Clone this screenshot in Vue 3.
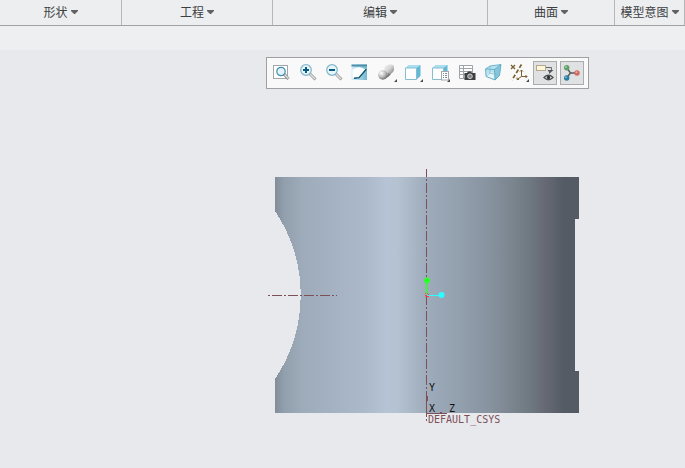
<script setup>
const groups = ['形状', '工程', '编辑', '曲面', '模型意图']

const tools = [
  { id: 'refit', label: '重新调整' },
  { id: 'zoom-in', label: '放大' },
  { id: 'zoom-out', label: '缩小' },
  { id: 'repaint', label: '重画' },
  { id: 'rendering', label: '渲染选项', menu: true },
  { id: 'style', label: '显示样式', menu: true },
  { id: 'saved', label: '已保存方向', menu: true },
  { id: 'views', label: '视图管理器' },
  { id: 'perspective', label: '透视图' },
  { id: 'datum', label: '基准显示过滤器', menu: true },
  { id: 'notes', label: '注释显示', active: true },
  { id: 'spin', label: '旋转中心', active: true },
]
</script>

<template>
  <div class="app">
    <nav class="groups">
      <button v-for="g in groups" :key="g" type="button" class="group">
        <span>{{ g }}</span>
        <svg class="caret" viewBox="0 0 7 4" aria-hidden="true"><path d="M0 0H7V1L4 4H3L0 1Z" /></svg>
      </button>
    </nav>
    <div class="strip"></div>

    <main class="canvas">
      <svg class="model" viewBox="0 0 685 418">
        <defs>
          <linearGradient id="metal" gradientUnits="userSpaceOnUse" x1="275" y1="0" x2="579" y2="0">
            <stop offset="0" stop-color="#828d9a" />
            <stop offset=".03" stop-color="#929fad" />
            <stop offset=".09" stop-color="#9dabba" />
            <stop offset=".21" stop-color="#a5b3c4" />
            <stop offset=".3" stop-color="#abb9cb" />
            <stop offset=".365" stop-color="#b6c3d5" />
            <stop offset=".4" stop-color="#b4c2d1" />
            <stop offset=".45" stop-color="#a9b7c6" />
            <stop offset=".5" stop-color="#9eabbb" />
            <stop offset=".61" stop-color="#929fad" />
            <stop offset=".71" stop-color="#87929f" />
            <stop offset=".79" stop-color="#78838c" />
            <stop offset=".84" stop-color="#6e7880" />
            <stop offset=".885" stop-color="#676a76" />
            <stop offset=".93" stop-color="#5a6069" />
            <stop offset=".95" stop-color="#555b64" />
            <stop offset="1" stop-color="#555b64" />
          </linearGradient>
        </defs>
        <path fill="url(#metal)" shape-rendering="crispEdges" d="M275 127H579V169H575V321H579V363H275V329A150 150 0 0 0 275 161Z" />
        <path class="axis" stroke-dasharray="10 2 2 2" stroke-dashoffset="2" d="M426.500 119V371" />
        <path class="axis" stroke-dasharray="10 2 2 2" stroke-dashoffset="12" d="M268 245.500H337" />
        <path class="axis" d="M426.500 347V364M427.500 346V351M427 363.500H447M440 362.500H442" />
        <path stroke="#ff3a3a" fill="none" d="M425 243.500H428M425.500 246.500H428.500M428.500 244V247M425 245.500H427" />
        <path stroke="#2cff2c" stroke-width="1.500" d="M426.500 230V244" />
        <circle cx="427" cy="230.500" r="3" fill="#2cff2c" />
        <path stroke="#2cffff" d="M427 245.500H442" />
        <circle cx="441.500" cy="245" r="3" fill="#2cffff" />
        <g class="tag">
          <text x="429" y="341">Y</text>
          <text x="429" y="362">X</text>
          <text x="449" y="362">Z</text>
          <text class="csys" x="428" y="373">DEFAULT_CSYS</text>
        </g>
      </svg>

      <div class="toolbar" role="toolbar" aria-label="图形工具栏">
        <button
          v-for="t in tools"
          :key="t.id"
          type="button"
          class="tool"
          :class="{ active: t.active }"
          :aria-label="t.label"
        >
          <svg viewBox="0 0 24 24" aria-hidden="true" fill="none">
            <g v-if="t.id === 'refit'">
              <rect x="4.500" y="4.500" width="14" height="13" fill="#fff" stroke="#a3a7aa" />
              <path d="M15 13L19.500 18" stroke="#8b8f92" stroke-width="3" />
              <path d="M15 13L19.500 17.500" stroke="#dddcd6" stroke-width="1.500" />
              <circle cx="12" cy="10.500" r="4.200" fill="#e5f4fa" stroke="#3f8fae" stroke-width="1.200" />
            </g>
            <g v-else-if="t.id === 'zoom-in' || t.id === 'zoom-out'">
              <path d="M13.500 12.500L19.500 18.500" stroke="#94989a" stroke-width="3" />
              <path d="M13.500 12.500L19 18" stroke="#e3e1dc" stroke-width="1.500" />
              <circle cx="10" cy="9" r="5.300" fill="#e8f6fb" stroke="#7fb5ca" stroke-width="1.200" />
              <path d="M7 9H13" stroke="#075a80" stroke-width="2" />
              <path v-if="t.id === 'zoom-in'" d="M10 6V12" stroke="#075a80" stroke-width="2" />
            </g>
            <g v-else-if="t.id === 'repaint'">
              <defs>
                <linearGradient id="pane" x1="0" y1="0" x2="1" y2="0">
                  <stop offset="0" stop-color="#d9eff6" />
                  <stop offset="1" stop-color="#74b8d2" />
                </linearGradient>
              </defs>
              <rect x="3.500" y="3.500" width="15.500" height="15.500" fill="url(#pane)" />
              <path d="M3.500 3.500H19V5.500H3.500Z" fill="#4b8faa" />
              <path d="M4.500 9Q9 5 14 7L17.500 8.500L11 16.500L4.500 17Z" fill="#fff" />
              <path d="M6 17.300L11 16.700L18.300 8.300" stroke="#12546f" stroke-width="1.400" />
            </g>
            <g v-else-if="t.id === 'rendering'">
              <defs>
                <radialGradient id="ball" cx=".35" cy=".3" r=".75">
                  <stop offset="0" stop-color="#fff" />
                  <stop offset=".55" stop-color="#bcbcbc" />
                  <stop offset="1" stop-color="#6c6c6c" />
                </radialGradient>
                <linearGradient id="block" x1="0" y1="0" x2="1" y2="1">
                  <stop offset="0" stop-color="#f4f4f4" />
                  <stop offset=".5" stop-color="#d2d2d2" />
                  <stop offset="1" stop-color="#777" />
                </linearGradient>
              </defs>
              <path d="M9.500 6Q11 3.500 14 3.500H17Q19 3.500 19 6V9Q18 12.500 14 13H11Q9.500 12 9.500 10Z" fill="url(#block)" />
              <path d="M10 15.500Q13 15 12.500 12.500L16.500 12.500Q14 16 10 17.500Z" fill="#777" />
              <circle cx="7.800" cy="14" r="4.700" fill="url(#ball)" />
            </g>
            <g v-else-if="t.id === 'style'">
              <path d="M4.500 7L8 4H19.500V15L15.500 18.500V7Z" fill="#62b8d5" />
              <path d="M4.500 7L8 4H19.500L15.500 7Z" fill="#abdff0" />
              <path d="M4.500 7H15.500V18.500H4.500Z" fill="#fff" stroke="#86bdd0" />
            </g>
            <g v-else-if="t.id === 'saved'">
              <path d="M4.500 7L8 4H19.500V12L15.500 16V7Z" fill="#62b8d5" />
              <path d="M4.500 7L8 4H19.500L15.500 7Z" fill="#abdff0" />
              <path d="M4.500 7H15.500V18.500H4.500Z" fill="#fff" stroke="#86bdd0" />
              <rect x="13.500" y="10.500" width="7" height="8.500" fill="#fff" stroke="#a4a7a8" />
              <path d="M15 12.500H16M17 12.500H19M15 14.500H16M17 14.500H19M15 16.500H16M17 16.500H19" stroke="#7d8b90" />
            </g>
            <g v-else-if="t.id === 'views'">
              <path d="M5.500 4.500H18.500V17.500H5.500ZM5.500 7.500H18.500M5.500 10.500H18.500M5.500 13.500H18.500M9.500 4.500V17.500" fill="#fff" stroke="#a0a4a6" />
              <path d="M10.500 12H13L14 10.500H17L18 12H21.500V19H10.500Z" fill="#3d3f41" />
              <circle cx="16" cy="15.300" r="2.300" fill="#7c8285" stroke="#d0d0d0" />
            </g>
            <g v-else-if="t.id === 'perspective'">
              <path d="M4.500 8L9 5L20 3.500L18.500 14.500L14 19L5 15.500Z" fill="#b6e2ef" />
              <path d="M13.500 8.500L20 3.500L18.500 14.500L14 19Z" fill="#86c6dc" />
              <path d="M6 13L10 11L13.500 12V18L6 15.500Z" fill="#e4f4f9" />
              <path d="M4.500 8L13.500 8.500L14 19L5 15.500ZM4.500 8L9 5L20 3.500L18.500 14.500L14 19M13.500 8.500L20 3.500" stroke="#57a3be" stroke-width=".8" />
              <path d="M9 5V12L18.500 14.500M9 12L5 15.500" stroke="#7dbbd0" stroke-width=".8" />
            </g>
            <g v-else-if="t.id === 'datum'">
              <path d="M4 4L8 8M8 4L4 8" stroke="#7a6030" stroke-width="1.300" />
              <path d="M14.500 3.500L5 19" stroke="#7a6030" stroke-width="1.700" stroke-dasharray="4 2" />
              <path d="M14.500 9V15.500H20M14.500 15.500L10 18.500M13 10.500L14.500 9L16 10.500M18.500 14L20 15.500L18.500 17M10 16.500V18.500H12" stroke="#7a6030" />
            </g>
            <g v-else-if="t.id === 'notes'">
              <rect x="3.500" y="4.500" width="9" height="5" fill="#fff5d9" stroke="#b3a98f" />
              <path d="M13 6.500H18.500V10" stroke="#66696b" />
              <path d="M14.500 9H20.500L16 13V11Z" fill="#55585a" />
              <path d="M11 16.500Q15.500 12 20 16.500Q15.500 21 11 16.500Z" fill="#fff" stroke="#4b4e50" stroke-width="1.300" />
              <circle cx="15.500" cy="16.500" r="1.800" fill="#303335" />
            </g>
            <g v-else>
              <path d="M6.500 6.500L10.500 12H17M10.500 12L6.500 17" stroke="#555a5d" stroke-width="1.400" />
              <circle cx="6.700" cy="6.700" r="2.700" fill="#5f9f68" />
              <circle cx="6" cy="6" r="1" fill="#a2cca5" />
              <circle cx="17" cy="12" r="2.700" fill="#d2695e" />
              <circle cx="16.500" cy="11.300" r="1" fill="#eba79f" />
              <circle cx="6.700" cy="17" r="2.700" fill="#287da0" />
              <circle cx="6" cy="16.300" r="1" fill="#7ab8d0" />
            </g>
            <path v-if="t.menu" d="M22 18V21H19Z" fill="#47494b" />
          </svg>
        </button>
      </div>
    </main>
  </div>
</template>

<style>
body {
  background: #e8e9ed;
}
</style>

<style scoped>
.app {
  font-family: "Noto Sans CJK SC", sans-serif;
  color: #3c3e42;
}
.groups {
  display: grid;
  grid-template-columns: 122fr 151fr 215fr 127fr 70fr;
  height: 25px;
  background: #edeef0;
  border-bottom: 1px solid #a0a2a4;
}
.group {
  display: flex;
  align-items: center;
  justify-content: center;
  gap: 3px;
  min-width: 0;
  padding: 0 0 2px;
  border: 0;
  border-right: 1px solid #b4b6b8;
  background: none;
  font: inherit;
  font-size: 12px;
  line-height: 23px;
  color: inherit;
  white-space: nowrap;
}
.caret {
  width: 7px;
  height: 4px;
  fill: #606264;
}
.strip {
  height: 24px;
  background: #eeeff1;
}
.canvas {
  position: relative;
  background: #e8e9ed;
}
.model {
  display: block;
  width: 100%;
  height: auto;
}
.axis {
  fill: none;
  stroke: #7d5057;
}
.tag {
  font-family: "DejaVu Sans Mono", monospace;
  font-size: 10px;
  fill: #111;
}
.csys {
  fill: #7d5057;
}
.toolbar {
  position: absolute;
  top: 7px;
  left: 266px;
  box-sizing: border-box;
  display: grid;
  grid-template-columns: repeat(12, 1fr);
  place-items: center;
  width: 323px;
  height: 32px;
  padding: 0 3px 0 1px;
  border: 1px solid #9ea0a2;
  background: #f9f9fa;
}
.tool {
  box-sizing: border-box;
  width: 24px;
  height: 24px;
  padding: 0;
  border: 0;
  background: none;
}
.tool svg {
  display: block;
  width: 24px;
  height: 24px;
}
.tool.active {
  background: #e0e1e3;
  box-shadow: inset 0 0 0 1px #aaacae;
}
</style>
